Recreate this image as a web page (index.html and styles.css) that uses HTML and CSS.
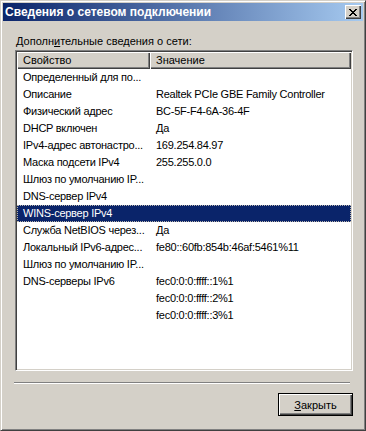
FILE: index.html
```html
<!DOCTYPE html>
<html lang="ru">
<head>
    <meta charset="UTF-8">
    <title>Сведения о сетевом подключении</title>
    <link rel="stylesheet" href="styles.css">
</head>
<body>
    <div class="window">
        <div class="titlebar">
            <span class="title">Сведения о сетевом подключении</span>
            <div class="close-btn">
                <svg width="8" height="7" viewBox="0 0 8 7" shape-rendering="crispEdges">
                    <path d="M0 0h2v1H0zM6 0h2v1H6zM1 1h2v1H1zM5 1h2v1H5zM2 2h4v1H2zM3 3h2v1H3zM2 4h4v1H2zM1 5h2v1H1zM5 5h2v1H5zM0 6h2v1H0zM6 6h2v1H6z" fill="#000"/>
                </svg>
            </div>
        </div>

        <div class="content">
            <div class="caption">Дополн<u>и</u>тельные сведения о сети:</div>

            <div class="listview">
                <div class="header">
                    <div class="hcell col-prop">Свойство</div>
                    <div class="hcell col-val">Значение</div>
                </div>
                <div class="rows">
                    <div class="row"><span class="col-prop">Определенный для по...</span><span class="col-val"></span></div>
                    <div class="row"><span class="col-prop">Описание</span><span class="col-val">Realtek PCIe GBE Family Controller</span></div>
                    <div class="row"><span class="col-prop">Физический адрес</span><span class="col-val">BC-5F-F4-6A-36-4F</span></div>
                    <div class="row"><span class="col-prop">DHCP включен</span><span class="col-val">Да</span></div>
                    <div class="row"><span class="col-prop">IPv4-адрес автонастро...</span><span class="col-val">169.254.84.97</span></div>
                    <div class="row"><span class="col-prop">Маска подсети IPv4</span><span class="col-val">255.255.0.0</span></div>
                    <div class="row"><span class="col-prop">Шлюз по умолчанию IP...</span><span class="col-val"></span></div>
                    <div class="row"><span class="col-prop">DNS-сервер IPv4</span><span class="col-val"></span></div>
                    <div class="row selected"><span class="col-prop">WINS-сервер IPv4</span><span class="col-val"></span></div>
                    <div class="row"><span class="col-prop">Служба NetBIOS через...</span><span class="col-val">Да</span></div>
                    <div class="row"><span class="col-prop">Локальный IPv6-адрес...</span><span class="col-val">fe80::60fb:854b:46af:5461%11</span></div>
                    <div class="row"><span class="col-prop">Шлюз по умолчанию IP...</span><span class="col-val"></span></div>
                    <div class="row"><span class="col-prop">DNS-серверы IPv6</span><span class="col-val">fec0:0:0:ffff::1%1</span></div>
                    <div class="row"><span class="col-prop"></span><span class="col-val">fec0:0:0:ffff::2%1</span></div>
                    <div class="row"><span class="col-prop"></span><span class="col-val">fec0:0:0:ffff::3%1</span></div>
                </div>
            </div>

            <div class="separator"></div>

            <div class="buttons">
                <button class="btn default"><u>З</u>акрыть</button>
            </div>
        </div>
    </div>
</body>
</html>
```

FILE: styles.css
```css
body {
    margin: 0;
    font-family: "Liberation Sans", Arial, sans-serif;
    font-size: 11px;
    color: #000;
    background: #d4d0c8;
}

/* classic window frame */
.window {
    width: 366px;
    height: 431px;
    box-sizing: border-box;
    padding: 2px;
    background: #d4d0c8;
    border: 1px solid;
    border-color: #d4d0c8 #404040 #404040 #d4d0c8;
    box-shadow: inset 1px 1px #fff, inset -1px -1px #808080;
    display: flex;
    flex-direction: column;
}

.titlebar {
    height: 18px;
    display: flex;
    align-items: center;
    justify-content: space-between;
    background: linear-gradient(to right, #0a246a, #a6caf0);
    padding: 0 2px 0 2px;
}

.title {
    color: #fff;
    font-weight: bold;
    font-size: 12px;
    padding-left: 0;
}

.close-btn {
    width: 16px;
    height: 14px;
    box-sizing: border-box;
    background: #d4d0c8;
    box-shadow: inset 1px 1px #fff, inset -1px -1px #404040, inset -2px -2px #808080;
    display: flex;
    align-items: center;
    justify-content: center;
    padding-right: 1px;
}

.content {
    flex: 1;
    display: flex;
    flex-direction: column;
}

.caption {
    margin: 14px 0 0 13px;
    height: 13px;
    line-height: 13px;
}

/* list view */
.listview {
    margin: 2px 0 0 12px;
    width: 338px;
    height: 321px;
    box-sizing: border-box;
    border: 1px solid;
    border-color: #808080 #fff #fff #808080;
    box-shadow: inset 1px 1px #404040, inset -1px -1px #d4d0c8;
    padding: 1px;
    background: #fff;
    overflow: hidden;
}

.header {
    display: grid;
    grid-template-columns: 133px 1fr;
    height: 17px;
}

.hcell {
    background: #d4d0c8;
    box-shadow: inset 1px 1px #fff, inset -1px -1px #404040, inset -2px -2px #808080;
    line-height: 17px;
    padding-left: 6px;
}

.row {
    display: grid;
    grid-template-columns: 133px 1fr;
    height: 17px;
    line-height: 17px;
    box-sizing: border-box;
    letter-spacing: -0.25px;
}

.row span {
    padding-left: 6px;
    white-space: nowrap;
    overflow: hidden;
}

.row.selected {
    background: #0a246a;
    color: #fff;
    outline: 1px dotted #b8b4ac;
    outline-offset: -1px;
}

.separator {
    margin: 11px 0 0 11px;
    width: 336px;
    height: 1px;
    background: #808080;
    border-bottom: 1px solid #fff;
}

.buttons {
    display: flex;
    justify-content: flex-end;
    padding: 9px 10px 0 0;
}

.btn {
    width: 75px;
    height: 23px;
    font-family: "Liberation Sans", Arial, sans-serif;
    font-size: 11px;
    color: #000;
    background: #d4d0c8;
    border: none;
    box-shadow: inset 1px 1px #fff, inset -1px -1px #404040, inset -2px -2px #808080;
    padding: 0;
}

.btn.default {
    border: 1px solid #000;
    box-shadow: inset 1px 1px #fff, inset -1px -1px #404040, inset -2px -2px #808080;
}
```
